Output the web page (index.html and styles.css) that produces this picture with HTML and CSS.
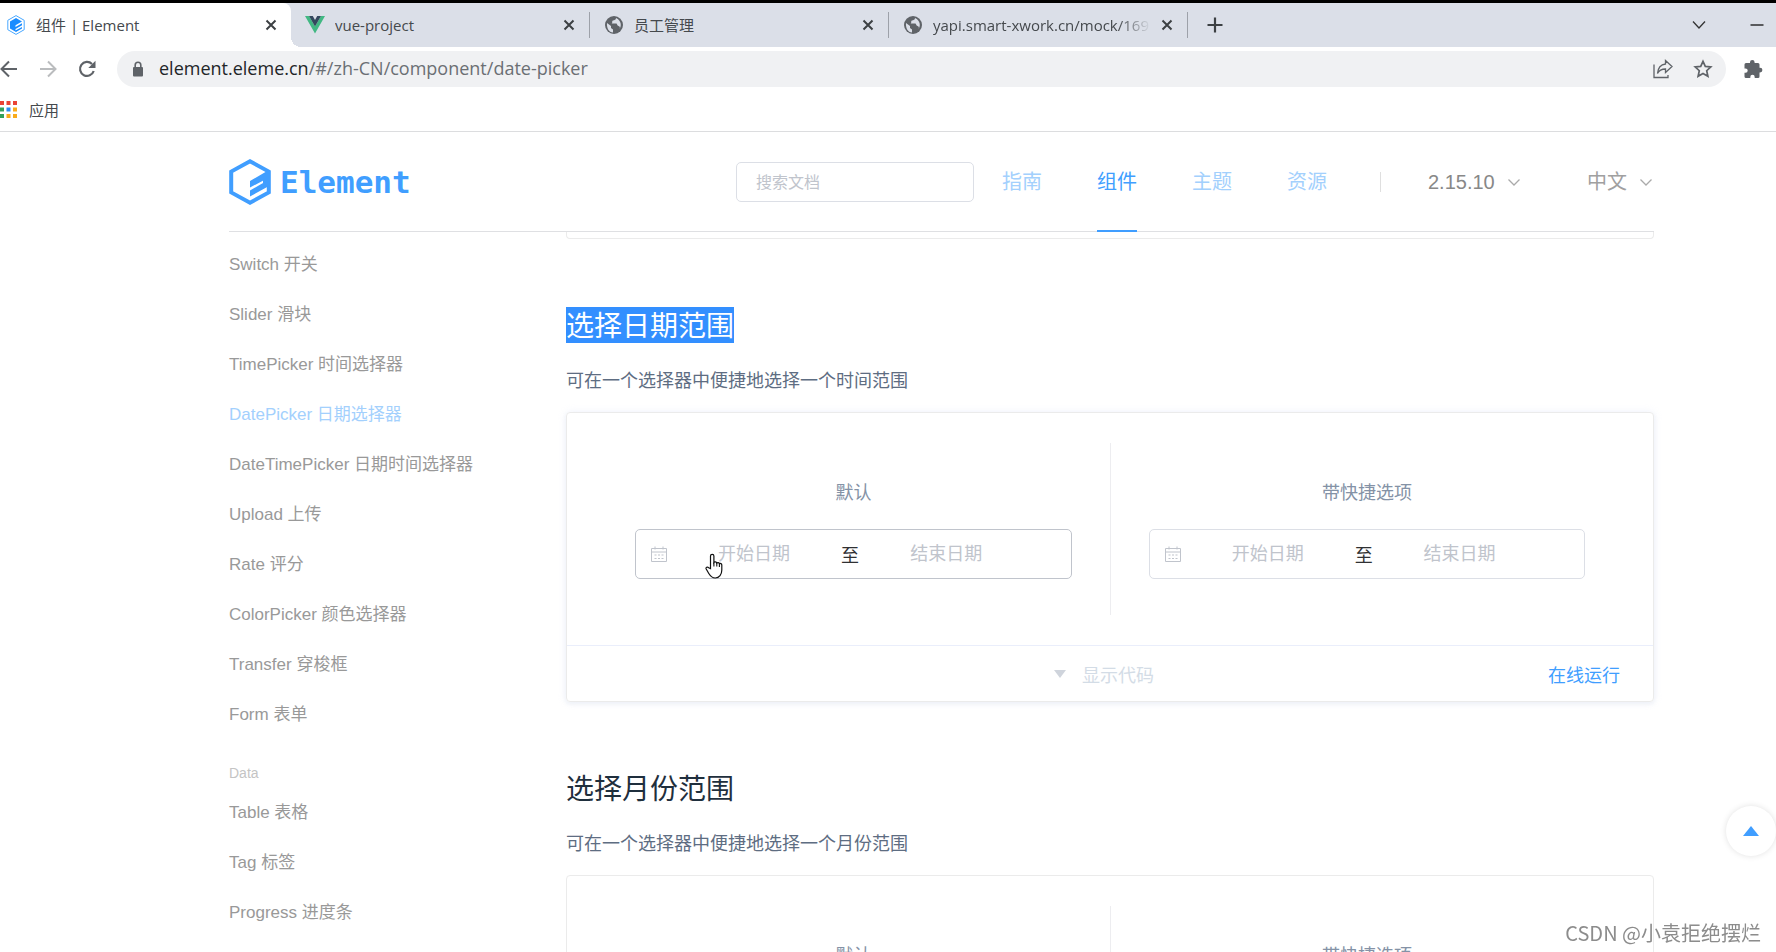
FILE: index.html
```html
<!DOCTYPE html>
<html lang="zh-CN">
<head>
<meta charset="utf-8">
<title>组件 | Element</title>
<link rel="stylesheet" href="styles.css">
</head>
<body>
<svg class="defs" aria-hidden="true">
  <symbol id="close" viewBox="0 0 12 12"><path d="M1.500 1.500l9 9M10.500 1.500l-9 9" fill="none" stroke="#3c4043" stroke-width="2"/></symbol>
  <symbol id="globe" viewBox="0 0 20 20"><circle cx="10" cy="10" r="9" fill="#5f6368"/><path d="M3 8l4 3v2l2 1.500v3C5 17.500 2.500 13 3 8zM12 3c0 2-1.500 2-3 2.500S9 8 7.500 8.500h5c1 1 .5 2 2 2.500s2 1.500.5 3.500c3-3 2.500-9-3-11.500z" fill="#dbdfe8"/></symbol>
  <symbol id="chevron" viewBox="0 0 14 14"><path d="M1.500 4.500l5.500 5.500 5.500-5.500" fill="none" stroke="currentColor" stroke-width="1.300"/></symbol>
  <symbol id="calendar" viewBox="0 0 16 16"><path d="M.5 2.500h15v13H.5zM.5 6h15M4 .5v3M12 .5v3" fill="none" stroke="#c0c4cc"/><path d="M3.500 9h2M7 9h2M10.500 9h2M3.500 12.500h2M7 12.500h2M10.500 12.500h2" stroke="#c0c4cc" stroke-width="1.200"/></symbol>
</svg>

<div class="browser">
  <div class="tabs">
    <div class="tab tab-active">
      <svg class="fav" viewBox="0 0 20 20"><path d="M10 .6l8.200 4.700v9.400L10 19.400l-8.200-4.700V5.300z" fill="none" stroke="#4aa8ff" stroke-width="1"/><path d="M10 3l6 3.500-6.500 3.800v1.700L16 8.300v1.900L9.500 14v1.600l6.500-3.700v1.700L10 17l-6-3.500v-7z" fill="#1a8cff"/></svg>
      <span class="tab-title">组件 | Element</span>
      <button class="tab-close" aria-label="关闭"><svg><use href="#close"/></svg></button>
    </div>
    <div class="tab">
      <svg class="fav" viewBox="0 0 20 20"><path d="M0 1h4l6 10.500L16 1h4L10 18.500z" fill="#41b883"/><path d="M4 1h3.800L10 5l2.200-4H16l-6 10.500z" fill="#34495e"/></svg>
      <span class="tab-title">vue-project</span>
      <button class="tab-close" aria-label="关闭"><svg><use href="#close"/></svg></button>
    </div>
    <div class="tab">
      <svg class="fav"><use href="#globe"/></svg>
      <span class="tab-title">员工管理</span>
      <button class="tab-close" aria-label="关闭"><svg><use href="#close"/></svg></button>
    </div>
    <div class="tab">
      <svg class="fav"><use href="#globe"/></svg>
      <span class="tab-title tab-fade">yapi.smart-xwork.cn/mock/169</span>
      <button class="tab-close" aria-label="关闭"><svg><use href="#close"/></svg></button>
    </div>
    <button class="new-tab" aria-label="新标签页"><svg viewBox="0 0 16 16"><path d="M8 .5v15M.5 8h15" stroke="#3c4043" stroke-width="2.200"/></svg></button>
    <div class="window-controls">
      <button aria-label="搜索标签页"><svg viewBox="0 0 14 14"><path d="M1 3.500l6 6.500 6-6.500" fill="none" stroke="#333" stroke-width="1.300"/></svg></button>
      <button aria-label="最小化"><svg viewBox="0 0 14 14"><path d="M.5 7h13" stroke="#222" stroke-width="1.400"/></svg></button>
    </div>
  </div>

  <div class="toolbar">
    <button aria-label="后退"><svg viewBox="0 0 18 18"><path d="M17 9H2M9 1.500L1.500 9 9 16.500" fill="none" stroke="#5f6368" stroke-width="2"/></svg></button>
    <button aria-label="前进"><svg viewBox="0 0 18 18"><path d="M1 9h15M9 1.500L16.500 9 9 16.500" fill="none" stroke="#babcbe" stroke-width="2"/></svg></button>
    <button aria-label="重新加载"><svg viewBox="0 0 18 18"><path d="M15.700 11A7 7 0 1 1 14 4" fill="none" stroke="#5f6368" stroke-width="2.200"/><path d="M17.500.8V8h-7.200z" fill="#5f6368"/></svg></button>
    <div class="omnibox">
      <svg class="lock" viewBox="0 0 12 16"><rect x="1" y="6" width="10" height="9.500" rx="1" fill="#5f6368"/><path d="M3.200 6.500V4a2.800 2.800 0 0 1 5.600 0v2.500" fill="none" stroke="#5f6368" stroke-width="1.600"/></svg>
      <div class="url"><span class="host">element.eleme.cn</span>/#/zh-CN/component/date-picker</div>
      <button aria-label="分享"><svg viewBox="0 0 20 20"><path d="M1 5.500V18.500h14V16" fill="none" stroke="#5f6368" stroke-width="1.300"/><path d="M12.500 1.500l6.500 6-6.500 6V10c-4 0-6.500 1.500-8 4.500C5 9 8 5.500 12.500 5z" fill="none" stroke="#5f6368" stroke-width="1.300"/></svg></button>
      <button aria-label="收藏"><svg viewBox="0 0 20 20"><path d="M10 2.300l2.300 5.100 5.500.6-4.100 3.700 1.200 5.500L10 14.400l-4.900 2.800 1.200-5.500L2.200 8l5.500-.6z" fill="none" stroke="#5f6368" stroke-width="1.700"/></svg></button>
    </div>
    <button class="ext" aria-label="扩展程序"><svg viewBox="0 0 20 20"><path d="M7 3.300a2.300 2.300 0 0 1 4.600 0V4H15a1.500 1.500 0 0 1 1.500 1.500v3.300h.6a2.300 2.300 0 0 1 0 4.600h-.6v4A1.500 1.500 0 0 1 15 19h-3.300v-1a2.200 2.200 0 0 0-4.400 0v1H3a1.500 1.500 0 0 1-1.500-1.500v-3.700h1a2.200 2.200 0 0 0 0-4.400h-1V5.500A1.500 1.500 0 0 1 3 4h4z" fill="#5f6368"/></svg></button>
  </div>

  <div class="bookmarks">
    <a href="#"><svg viewBox="0 0 17 17"><path d="M0 0h4v4H0zM6.500 0h4v4h-4zM13 0h4v4h-4z" fill="#ea4335"/><path d="M0 6.500h4v4H0zM0 13h4v4H0z" fill="#34a05a"/><path d="M6.500 6.500h4v4h-4z" fill="#2a8bf2"/><path d="M13 6.500h4v4h-4zM6.500 13h4v4h-4zM13 13h4v4h-4z" fill="#f9ab1a"/></svg>应用</a>
  </div>
</div>

<div class="page">
  <header class="header">
    <a class="logo" href="#">
      <svg viewBox="0 0 42 46"><path d="M21 2.300L2.200 12.600v20.800L21 43.700l18.800-10.300V12.600z" fill="none" stroke="#409eff" stroke-width="4"/><path d="M21 22l18-10.500V19L21 28.500zM21 31.500l19-11V27L21 37.500zM34 16h6v10h-6z" fill="#409eff"/></svg>
      <span>Element</span>
    </a>
    <input class="search" type="text" placeholder="搜索文档" aria-label="搜索文档">
    <nav class="nav">
      <a href="#">指南</a>
      <a class="current" href="#">组件</a>
      <a href="#">主题</a>
      <a href="#">资源</a>
    </nav>
    <span class="divider"></span>
    <label class="pick version"><select aria-label="版本"><option>2.15.10</option></select><svg><use href="#chevron"/></svg></label>
    <label class="pick lang"><select aria-label="语言"><option>中文</option></select><svg><use href="#chevron"/></svg></label>
  </header>

  <div class="body">
    <nav class="side">
      <a href="#">Switch 开关</a>
      <a href="#">Slider 滑块</a>
      <a href="#">TimePicker 时间选择器</a>
      <a class="current" href="#">DatePicker 日期选择器</a>
      <a href="#">DateTimePicker 日期时间选择器</a>
      <a href="#">Upload 上传</a>
      <a href="#">Rate 评分</a>
      <a href="#">ColorPicker 颜色选择器</a>
      <a href="#">Transfer 穿梭框</a>
      <a href="#">Form 表单</a>
      <div class="group">Data</div>
      <a href="#">Table 表格</a>
      <a href="#">Tag 标签</a>
      <a href="#">Progress 进度条</a>
    </nav>

    <main class="content">
      <div class="card-end"></div>

      <h3><span class="selected">选择日期范围</span></h3>
      <p>可在一个选择器中便捷地选择一个时间范围</p>
      <section class="card card-hover">
        <div class="demo">
          <div class="pane">
            <span class="pane-label">默认</span>
            <div class="range range-hover">
              <svg class="cal"><use href="#calendar"/></svg>
              <input type="text" placeholder="开始日期" aria-label="开始日期">
              <span>至</span>
              <input type="text" placeholder="结束日期" aria-label="结束日期">
              <svg class="pointer" viewBox="0 0 18 26"><path d="M5.500 15.500V3a1.700 1.700 0 0 1 3.400 0v6.500c.6-1 2.500-.8 2.900.5.700-.8 2.300-.5 2.600.6.900-.5 2.400 0 2.400 1.500V17c0 4.500-2.500 8-6.500 8-3.500 0-5-2-6.500-4.500l-2.600-4.500c-.8-1.500 1.200-2.700 2.400-1.300z" fill="#fff" stroke="#111" stroke-width="1.200"/><path d="M8.900 9.500v4M11.800 10v3.500M14.400 10.500v3.500" stroke="#111" stroke-width="1.100"/></svg>
            </div>
          </div>
          <div class="pane">
            <span class="pane-label">带快捷选项</span>
            <div class="range">
              <svg class="cal"><use href="#calendar"/></svg>
              <input type="text" placeholder="开始日期" aria-label="开始日期">
              <span>至</span>
              <input type="text" placeholder="结束日期" aria-label="结束日期">
            </div>
          </div>
        </div>
        <div class="card-foot">
          <button class="show-code"><svg viewBox="0 0 12 8"><path d="M0 0h12L6 8z" fill="#cfd4dc"/></svg>显示代码</button>
          <button class="run">在线运行</button>
        </div>
      </section>

      <h3>选择月份范围</h3>
      <p>可在一个选择器中便捷地选择一个月份范围</p>
      <section class="card">
        <div class="demo">
          <div class="pane">
            <span class="pane-label">默认</span>
          </div>
          <div class="pane">
            <span class="pane-label">带快捷选项</span>
          </div>
        </div>
      </section>
    </main>
  </div>
</div>

<button class="backtop" aria-label="回到顶部"><svg viewBox="0 0 16 10"><path d="M8 0l8 10H0z" fill="#409eff"/></svg></button>
<div class="watermark">CSDN @小袁拒绝摆烂</div>
</body>
</html>
```
FILE: styles.css
```css
* { box-sizing: border-box; }

body {
  margin: 0;
  height: 100vh;
  overflow: hidden;
  display: flex;
  flex-direction: column;
  background: #fff;
  font-family: "Liberation Sans", "Noto Sans CJK SC", sans-serif;
  font-size: 18px;
}

button, input, select { font: inherit; color: inherit; border: 0; padding: 0; background: none; outline: 0; }
button { cursor: pointer; }
a { color: inherit; text-decoration: none; }
svg { display: block; flex: none; }
.defs { position: absolute; width: 0; height: 0; }

/* browser frame */
.browser {
  flex: none;
  border-top: 3px solid #000;
  border-bottom: 1px solid #dcdddf;
  font-family: "Open Sans", "Noto Sans CJK SC", sans-serif;
}
.tabs { display: flex; align-items: center; height: 44px; background: #dbdfe8; }
.tab {
  position: relative;
  flex: 0 1 299px;
  min-width: 0;
  display: flex;
  align-items: center;
  gap: 10px;
  height: 26px;
  padding: 0 14px;
  border-right: 1px solid #9da1a9;
  font-size: 15px;
  color: #45494d;
}
.tab-active {
  flex-basis: 291px;
  height: 44px;
  padding-left: 6px;
  padding-bottom: 4px;
  padding-top: 4px;
  border: 0;
  border-radius: 0 8px 0 0;
  background: #fff;
}
.tab-active::after {
  content: "";
  position: absolute;
  right: -10px;
  bottom: 0;
  width: 10px;
  height: 10px;
  background: radial-gradient(circle at 100% 0, #dbdfe8 10px, #fff 10px);
}
.fav { width: 20px; height: 20px; }
.tab-title { flex: 1; min-width: 0; overflow: hidden; white-space: nowrap; line-height: 24px; }
.tab-fade { -webkit-mask-image: linear-gradient(90deg, #000 85%, transparent); mask-image: linear-gradient(90deg, #000 85%, transparent); }
.tab-close svg { width: 12px; height: 12px; }
.new-tab { margin-left: 19px; }
.new-tab svg { width: 16px; height: 16px; }
.window-controls { display: flex; gap: 44px; margin-left: auto; padding-right: 12px; }
.window-controls svg { width: 14px; height: 14px; }

.toolbar { display: flex; align-items: center; gap: 21px; height: 44px; padding-right: 13px; background: #fff; }
.toolbar > button svg { width: 18px; height: 18px; }
.omnibox {
  flex: 1;
  display: flex;
  align-items: center;
  gap: 18px;
  height: 36px;
  padding: 0 13px 0 15px;
  border-radius: 18px;
  background: #f0f1f3;
}
.lock { width: 12px; height: 16px; }
.url { flex: 1; margin-left: -3px; padding-bottom: 2px; font-size: 18px; color: #6b6f74; }
.host { color: #222528; }
.omnibox button + button { margin-left: 2px; }
.omnibox button svg { width: 20px; height: 20px; }
.toolbar .ext { margin-left: -4px; }
.toolbar .ext svg { width: 20px; height: 20px; }

.bookmarks { height: 40px; display: flex; align-items: center; padding-bottom: 4px; font-size: 15px; color: #45494d; }
.bookmarks a { display: flex; align-items: center; gap: 12px; }
.bookmarks svg { width: 17px; height: 17px; }

/* documentation page */
.page { flex: 1; min-height: 0; overflow: hidden; padding: 0 122px 0 229px; }
.header { display: flex; align-items: center; height: 100px; padding-right: 1px; border-bottom: 1px solid #dfe0e3; }
.logo {
  display: flex;
  align-items: center;
  gap: 9px;
  margin-right: auto;
  color: #409eff;
  font: bold 31px/46px "DejaVu Sans Mono", monospace;
}
.logo svg { width: 42px; height: 46px; }
.search { width: 238px; height: 40px; margin-right: 28px; padding: 2px 19px 0; border: 1px solid #dcdfe6; border-radius: 5px; font-size: 16px; }
input::placeholder { color: #c0c4cc; opacity: 1; }
.nav { display: flex; gap: 55px; align-self: stretch; font-size: 20px; color: #a3d0fd; }
.nav a { display: flex; align-items: center; height: 100px; padding-bottom: 3px; }
.nav .current { color: #409eff; border-top: 2px solid transparent; border-bottom: 2px solid #409eff; }
.divider { width: 1px; height: 20px; margin: 0 47px 0 53px; background: #dfdfdf; }
.pick { display: flex; align-items: center; gap: 12px; font-size: 20px; color: #888; }
.pick select { appearance: none; }
.pick svg { width: 14px; height: 14px; color: #aaa; }
.lang { margin-left: 66px; color: #a0a0a0; }

.body { display: flex; }
.side { flex: none; width: 337px; padding-top: 8px; font-size: 17px; line-height: 50px; color: #999; }
.side a { display: block; }
.side .current { color: #a3d0fd; }
.group { margin-top: 18px; font-size: 14px; line-height: 30px; color: #c4c4c4; }

.content { flex: 1; min-width: 0; }
.card-end { height: 7px; border: 1px solid #ebebeb; border-top: 0; border-radius: 0 0 4px 4px; }
h3 { height: 36px; margin: 68px 0 24px; font-size: 28px; font-weight: 400; line-height: 40px; color: #1f2f3d; }
.selected { display: inline-block; vertical-align: top; height: 36px; background: #338fff; color: #fff; }
p { margin: 0 0 17px; line-height: 28px; color: #5e6d82; }
.card { border: 1px solid #ebebeb; border-radius: 4px; }
.card-hover { box-shadow: 0 0 8px rgba(232, 237, 250, .6), 0 2px 4px rgba(220, 224, 235, .4); }
.demo { display: grid; grid-template-columns: repeat(2, minmax(0, 1fr)); padding: 30px; }
.pane { padding: 36px 38px; display: flex; flex-direction: column; gap: 22px; text-align: center; }
.pane + .pane { border-left: 1px solid #ededf0; }
.pane-label { line-height: 28px; color: #8492a6; }
.range { position: relative; display: flex; align-items: center; height: 50px; padding: 0 15px; border: 1px solid #dcdfe6; border-radius: 5px; }
.range-hover { border-color: #c0c4cc; }
.range .cal { width: 16px; height: 16px; margin-right: 2px; }
.range input { flex: 0 1 42%; min-width: 0; height: 48px; text-align: center; }
.range span { flex: none; width: 22px; color: #303133; }
.range .pointer { position: absolute; left: 69px; top: 23px; width: 18px; height: 26px; }
.card-foot { display: grid; grid-template-columns: 1fr auto 1fr; align-items: center; height: 56px; padding: 0 33px; border-top: 1px solid #eaeefb; }
.show-code { grid-column: 2; display: flex; align-items: center; gap: 16px; padding-right: 12px; color: #d3dce6; }
.show-code svg { width: 12px; height: 8px; }
.run { justify-self: end; color: #409eff; }

/* floating layer */
.backtop {
  position: fixed;
  right: 0;
  bottom: 96px;
  width: 50px;
  height: 50px;
  display: grid;
  place-items: center;
  border-radius: 50%;
  background: #fff;
  box-shadow: 0 0 6px rgba(0, 0, 0, .12);
}
.backtop svg { width: 16px; height: 10px; }
.watermark {
  position: fixed;
  right: 15px;
  bottom: 4px;
  font-family: "Noto Sans CJK SC", sans-serif;
  font-size: 20px;
  line-height: 30px;
  color: #8c8c8c;
  text-shadow: 1px 1px 0 #fff;
}
```
